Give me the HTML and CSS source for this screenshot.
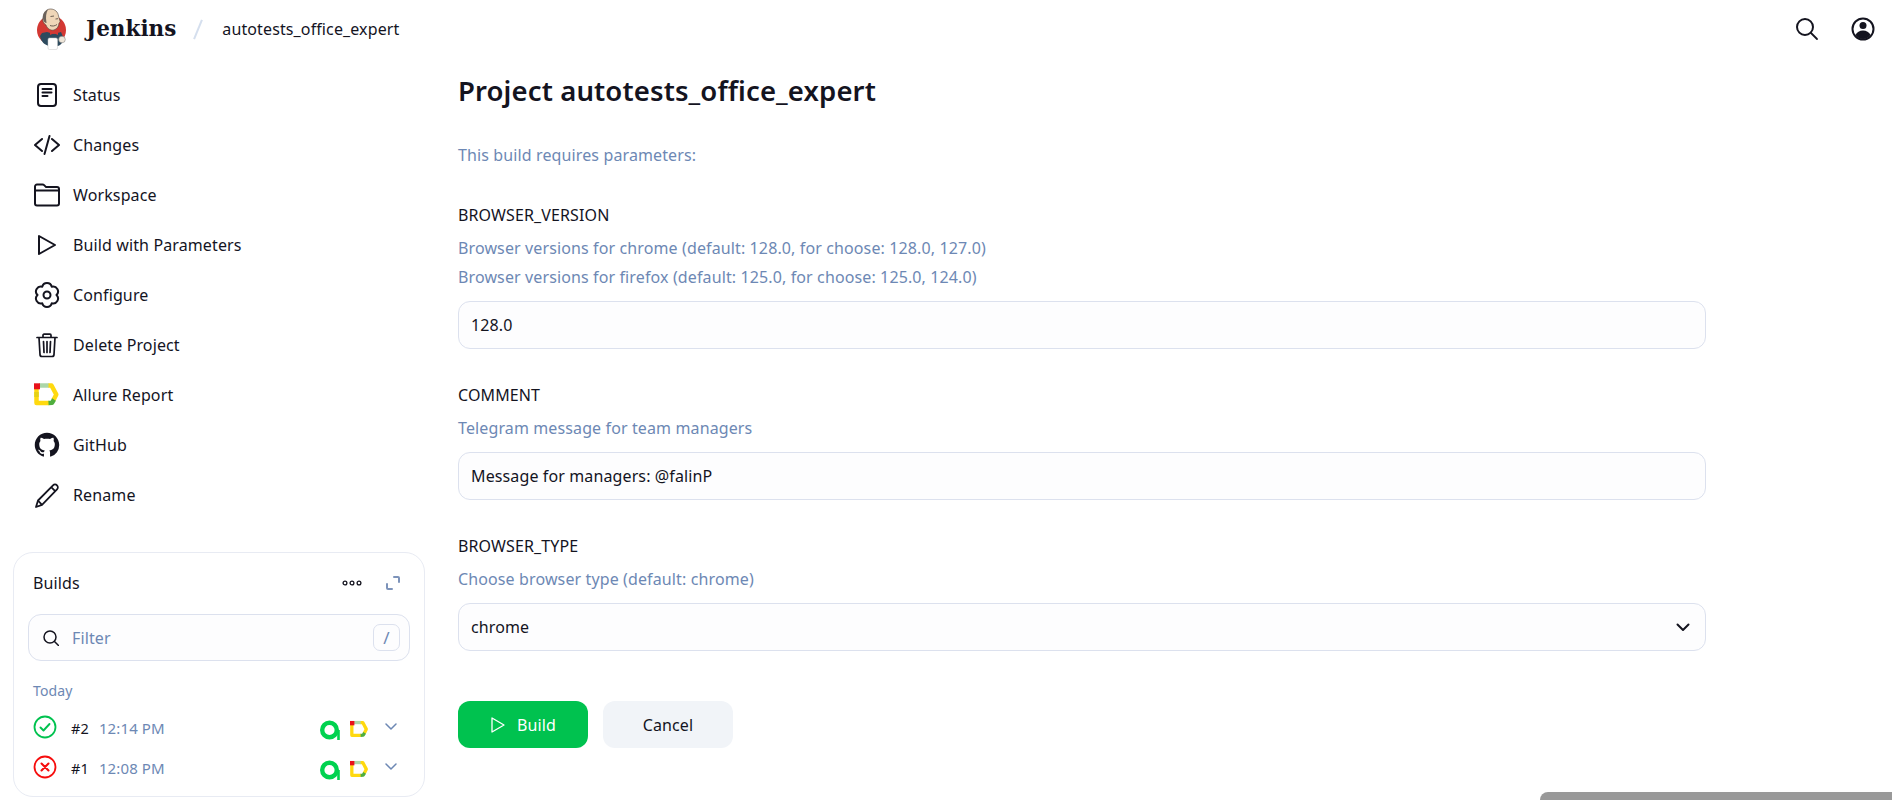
FILE: index.html
```html
<!DOCTYPE html>
<html lang="en">
<head>
    <meta charset="UTF-8">
    <meta name="viewport" content="width=device-width, initial-scale=1.0">
    <title>Jenkins - autotests_office_expert</title>
    <link rel="stylesheet" href="styles.css">
</head>
<body>
    <header class="topbar">
        <svg class="logo" viewBox="0 0 30 42">
            <circle cx="14.500" cy="22" r="14.500" fill="#d33833"/>
            <path d="M3 28c1 6 5 9 9 10h9c3-1 5-4 6-7l-3-7-7 2-7-2-5 1z" fill="#2d4a5e"/>
            <path d="M6 11C6 5 9 1 13.500 1c4.500 0 7.500 3 8 7l1.500 5c.3 1-.5 1.500-1 2 0 3-2 6-5 7-4 1-7-2-8-5-2-1-3-3-3.500-6z" fill="#efd6b8" stroke="#4a403a" stroke-width=".6"/>
            <path d="M6 11C5.500 6 8 2.500 11 1.500 9 5 8.500 9 9.500 15 8 15 6.500 13.500 6 11z" fill="#6b625b"/>
            <path d="M13.500 8.500l3.500-.5M18.500 11l2.500-.3M13 17.500c2.500 1 5 .5 7-1" fill="none" stroke="#4a403a" stroke-width=".8"/>
            <path d="M13 22l4 1.800 4-1.800v5l-4-1.800-4 1.800z" fill="#d33833"/>
            <rect x="11" y="30" width="9.500" height="11.500" rx="1.500" fill="#fff" stroke="#c4c4c4" stroke-width=".5"/>
            <circle cx="25" cy="31.500" r="3.300" fill="#efe6d9" stroke="#777" stroke-width=".5"/>
        </svg>
        <span class="brand">Jenkins</span>
        <span class="crumb-sep"></span>
        <span class="crumb">autotests_office_expert</span>
        <div class="topbar-actions">
            <svg class="top-icon" viewBox="0 0 24 24" fill="none" stroke="#14141f" stroke-width="2">
                <circle cx="10" cy="10" r="8"/>
                <path d="M16 16l6 6" stroke-linecap="round" stroke-width="1.800"/>
            </svg>
            <svg class="top-icon" viewBox="0 0 24 24">
                <circle cx="12" cy="12" r="10.500" fill="none" stroke="#14141f" stroke-width="2"/>
                <circle cx="12" cy="8.500" r="3.500" fill="#14141f"/>
                <path d="M4.500 18c1.500-3 4-4.500 7.500-4.500s6 1.500 7.500 4.500c-2 2.500-4.500 4-7.500 4s-5.500-1.500-7.500-4z" fill="#14141f"/>
            </svg>
        </div>
    </header>

    <div class="layout">
        <aside class="sidebar">
            <nav class="side-nav">
                <a class="side-item">
                    <svg class="side-icon" viewBox="0 0 26 26" fill="none" stroke="#14141f" stroke-width="2" stroke-linecap="round">
                        <rect x="4" y="2" width="18" height="22" rx="3"/>
                        <path d="M8.500 7h9M8.500 10.500h9M8.500 14h5"/>
                    </svg>
                    <span>Status</span>
                </a>
                <a class="side-item">
                    <svg class="side-icon" viewBox="0 0 26 26" fill="none" stroke="#14141f" stroke-width="2" stroke-linecap="round" stroke-linejoin="round">
                        <path d="M8 7l-7 6 7 6M18 7l7 6-7 6M15.500 4l-5 18"/>
                    </svg>
                    <span>Changes</span>
                </a>
                <a class="side-item">
                    <svg class="side-icon" viewBox="0 0 26 26" fill="none" stroke="#14141f" stroke-width="2" stroke-linejoin="round">
                        <path d="M1 8.500V4.500a2 2 0 0 1 2-2h5.500c.6 0 1.200.2 1.600.6l2 2h10.900a2 2 0 0 1 2 2v14.400a2 2 0 0 1-2 2H3a2 2 0 0 1-2-2zh24"/>
                    </svg>
                    <span>Workspace</span>
                </a>
                <a class="side-item">
                    <svg class="side-icon" viewBox="0 0 26 26" fill="none" stroke="#14141f" stroke-width="2" stroke-linejoin="round">
                        <path d="M5 4l16 9-16 9z"/>
                    </svg>
                    <span>Build with Parameters</span>
                </a>
                <a class="side-item">
                    <svg class="side-icon" viewBox="0 0 26 26" fill="none" stroke="#14141f" stroke-width="2">
                        <path d="M8.250 4.770A4.900 4.900 0 0 1 17.750 4.770A4.900 4.900 0 0 1 22.500 13A4.900 4.900 0 0 1 17.750 21.230A4.900 4.900 0 0 1 8.250 21.230A4.900 4.900 0 0 1 3.500 13A4.900 4.900 0 0 1 8.250 4.770z" stroke-linejoin="round"/>
                        <circle cx="13" cy="13" r="3.500"/>
                    </svg>
                    <span>Configure</span>
                </a>
                <a class="side-item">
                    <svg class="side-icon" viewBox="0 0 26 26" fill="none" stroke="#14141f" stroke-width="2" stroke-linecap="round" stroke-linejoin="round">
                        <path d="M3 5.500h20M9 5V3.200a1 1 0 0 1 1-1h6a1 1 0 0 1 1 1V5M5 5.500l1 17a2 2 0 0 0 2 2h10a2 2 0 0 0 2-2l1-17M9.500 9.500l.5 11M13 9.500v11M16.500 9.500l-.5 11" stroke-width="1.700"/>
                    </svg>
                    <span>Delete Project</span>
                </a>
                <a class="side-item">
                    <svg class="side-icon" viewBox="0 0 26 26" fill="none" stroke-width="4.500" stroke-linejoin="round">
                        <path d="M2.500 7v14H15" stroke="#ffd90f"/>
                        <path d="M2.500 10v5" stroke="#e4d117"/>
                        <path d="M5 3.500h10" stroke="#acd6a8"/>
                        <path d="M14.500 3.500h3l4.800 9-2.800 5.500" stroke="#ffd90f"/>
                        <path d="M14.500 21l3.500-.2 2-3.300" stroke="#4fae3e"/>
                        <path d="M0 1.300h6v6H0z" fill="#e8111b" stroke="none"/>
                    </svg>
                    <span>Allure Report</span>
                </a>
                <a class="side-item">
                    <svg class="side-icon" viewBox="-.5 -.5 17 17" fill="#14141f">
                        <path d="M8 0C3.580 0 0 3.580 0 8c0 3.540 2.290 6.530 5.470 7.590.4.07.55-.17.55-.38 0-.19-.01-.82-.01-1.490-2.010.37-2.530-.49-2.690-.94-.09-.23-.48-.94-.82-1.130-.28-.15-.68-.52-.01-.53.63-.01 1.080.58 1.230.82.72 1.210 1.870.87 2.330.66.07-.52.28-.87.51-1.070-1.780-.2-3.640-.89-3.640-3.950 0-.87.31-1.590.82-2.150-.08-.2-.36-1.020.08-2.120 0 0 .67-.21 2.200.82.64-.18 1.320-.27 2-.27.68 0 1.360.09 2 .27 1.530-1.040 2.200-.82 2.200-.82.44 1.100.16 1.920.08 2.120.51.56.82 1.270.82 2.150 0 3.070-1.870 3.750-3.650 3.950.29.25.54.73.54 1.480 0 1.070-.01 1.930-.01 2.200 0 .21.15.46.55.38A8.013 8.013 0 0016 8c0-4.420-3.580-8-8-8z"/>
                    </svg>
                    <span>GitHub</span>
                </a>
                <a class="side-item">
                    <svg class="side-icon" viewBox="0 0 26 26" fill="none" stroke="#14141f" stroke-width="1.800" stroke-linejoin="round">
                        <path d="M2 25l2-6.500L19 3.300a2.800 2.800 0 0 1 4 4L8 22.800zM4 18.500l4 4.300M17.200 5.200l4 4"/>
                    </svg>
                    <span>Rename</span>
                </a>
            </nav>

            <section class="builds-card">
                <div class="builds-head">
                    <span>Builds</span>
                    <svg class="builds-dots" viewBox="0 0 20 6" fill="none" stroke="#14141f" stroke-width="1.300">
                        <circle cx="3" cy="3" r="1.900"/>
                        <circle cx="10" cy="3" r="1.900"/>
                        <circle cx="17" cy="3" r="1.900"/>
                    </svg>
                    <svg class="builds-expand" viewBox="0 0 14 14" fill="none" stroke="#7d93ba" stroke-width="2" stroke-linecap="round" stroke-linejoin="round">
                        <path d="M8 1h4a1 1 0 0 1 1 1v4M1 8v4a1 1 0 0 0 1 1h4"/>
                    </svg>
                </div>
                <div class="filter-box">
                    <svg class="filter-icon" viewBox="0 0 16 16" fill="none" stroke="#14141f" stroke-width="1.500" stroke-linecap="round">
                        <circle cx="7" cy="7" r="6"/>
                        <path d="M11.500 11.500l4 4"/>
                    </svg>
                    <input class="filter-input" type="text" placeholder="Filter">
                    <kbd class="filter-key">/</kbd>
                </div>
                <div class="builds-day">Today</div>
                <div class="build-row">
                    <svg class="build-status" viewBox="0 0 24 24" fill="none" stroke="#00c24f" stroke-width="1.800" stroke-linecap="round" stroke-linejoin="round">
                        <circle cx="12" cy="12" r="10.500"/>
                        <path d="M7.500 12.500l3 3 6-6.500" stroke-width="1.900"/>
                    </svg>
                    <span class="build-num">#2</span>
                    <span class="build-time">12:14 PM</span>
                    <svg class="build-a" viewBox="0 0 20 20" fill="none" stroke="#00d24f">
                        <circle cx="9.500" cy="10" r="7.300" stroke-width="4.400"/>
                        <path d="M18.500 10v10" stroke-width="2.600"/>
                    </svg>
                    <svg class="build-allure" viewBox="0 0 26 26" fill="none" stroke-width="4.500" stroke-linejoin="round">
                        <path d="M2.500 7v14H15" stroke="#ffd90f"/>
                        <path d="M5 3.500h10" stroke="#acd6a8"/>
                        <path d="M14.500 3.500h3l4.800 9-2.800 5.500" stroke="#ffd90f"/>
                        <path d="M14.500 21l3.500-.2 2-3.300" stroke="#4fae3e"/>
                        <path d="M0 1.300h6v6H0z" fill="#e8111b" stroke="none"/>
                    </svg>
                    <svg class="build-chevron" viewBox="0 0 12 7" fill="none" stroke="#6d88b4" stroke-width="1.500" stroke-linecap="round" stroke-linejoin="round">
                        <path d="M1 1l5 5 5-5"/>
                    </svg>
                </div>
                <div class="build-row">
                    <svg class="build-status" viewBox="0 0 24 24" fill="none" stroke="#f60d0d" stroke-width="1.800" stroke-linecap="round">
                        <circle cx="12" cy="12" r="10.500"/>
                        <path d="M8.500 8.500l7 7M15.500 8.500l-7 7" stroke-width="2.100"/>
                    </svg>
                    <span class="build-num">#1</span>
                    <span class="build-time">12:08 PM</span>
                    <svg class="build-a" viewBox="0 0 20 20" fill="none" stroke="#00d24f">
                        <circle cx="9.500" cy="10" r="7.300" stroke-width="4.400"/>
                        <path d="M18.500 10v10" stroke-width="2.600"/>
                    </svg>
                    <svg class="build-allure" viewBox="0 0 26 26" fill="none" stroke-width="4.500" stroke-linejoin="round">
                        <path d="M2.500 7v14H15" stroke="#ffd90f"/>
                        <path d="M5 3.500h10" stroke="#acd6a8"/>
                        <path d="M14.500 3.500h3l4.800 9-2.800 5.500" stroke="#ffd90f"/>
                        <path d="M14.500 21l3.500-.2 2-3.300" stroke="#4fae3e"/>
                        <path d="M0 1.300h6v6H0z" fill="#e8111b" stroke="none"/>
                    </svg>
                    <svg class="build-chevron" viewBox="0 0 12 7" fill="none" stroke="#6d88b4" stroke-width="1.500" stroke-linecap="round" stroke-linejoin="round">
                        <path d="M1 1l5 5 5-5"/>
                    </svg>
                </div>
            </section>
        </aside>

        <main class="content">
            <h1 class="page-title">Project autotests_office_expert</h1>
            <p class="intro">This build requires parameters:</p>

            <div class="param">
                <div class="param-name">BROWSER_VERSION</div>
                <div class="param-desc">Browser versions for chrome (default: 128.0, for choose: 128.0, 127.0)</div>
                <div class="param-desc">Browser versions for firefox (default: 125.0, for choose: 125.0, 124.0)</div>
                <input class="field" type="text" value="128.0">
            </div>

            <div class="param">
                <div class="param-name">COMMENT</div>
                <div class="param-desc">Telegram message for team managers</div>
                <input class="field" type="text" value="Message for managers: @falinP">
            </div>

            <div class="param">
                <div class="param-name">BROWSER_TYPE</div>
                <div class="param-desc">Choose browser type (default: chrome)</div>
                <div class="select-wrap">
                    <select class="field">
                        <option>chrome</option>
                        <option>firefox</option>
                    </select>
                    <svg class="select-chevron" viewBox="0 0 14 9" fill="none" stroke="#14141f" stroke-width="2" stroke-linecap="round" stroke-linejoin="round">
                        <path d="M1.500 1.500L7 7l5.500-5.500"/>
                    </svg>
                </div>
            </div>

            <div class="actions">
                <button class="btn btn-build">
                    <svg class="btn-icon" viewBox="0 0 16 18" fill="none" stroke="#fff" stroke-width="1.300" stroke-linejoin="round">
                        <path d="M2 2l12 7-12 7z"/>
                    </svg>
                    Build
                </button>
                <button class="btn btn-cancel">Cancel</button>
            </div>
        </main>
    </div>

    <div class="corner-bar"></div>
</body>
</html>
```

FILE: styles.css
```css
* {
    box-sizing: border-box;
}

html, body {
    height: 100%;
}

body {
    margin: 0;
    overflow: hidden;
    background-color: #fff;
    color: #14141f;
    font-family: "Noto Sans", "Open Sans", sans-serif;
    font-size: 16px;
    line-height: 24px;
    letter-spacing: .12px;
}

.topbar {
    display: flex;
    align-items: center;
    height: 56px;
    padding: 2px 17px 0 37px;
}

.logo {
    width: 30px;
    height: 42px;
}

.brand {
    margin-left: 19px;
    font-family: "DejaVu Serif", serif;
    font-size: 21.5px;
    font-weight: 700;
    letter-spacing: 0;
}

.crumb-sep {
    width: 2px;
    height: 21px;
    margin: 0 23px 0 21px;
    background-color: #d5dfee;
    transform: rotate(22deg);
}

.crumb {
    font-size: 16px;
}

.topbar-actions {
    display: flex;
    align-items: center;
    gap: 32px;
    margin-left: auto;
}

.top-icon {
    width: 24px;
    height: 24px;
}

.layout {
    display: flex;
}

.sidebar {
    width: 444px;
    padding: 14px 0 0 13px;
    flex-shrink: 0;
}

.side-item {
    display: flex;
    align-items: center;
    gap: 13px;
    height: 50px;
    padding-left: 21px;
}

.side-icon {
    width: 26px;
    height: 26px;
    flex-shrink: 0;
}

.builds-card {
    width: 412px;
    height: 245px;
    margin-top: 32px;
    padding: 18px 14px 0;
    border: 1px solid #e8ebf3;
    border-radius: 20px;
}

.builds-head {
    display: flex;
    align-items: center;
    height: 24px;
    padding: 0 10px 0 5px;
}

.builds-dots {
    width: 20px;
    height: 6px;
    margin-left: auto;
}

.builds-expand {
    width: 14px;
    height: 14px;
    margin-left: 24px;
}

.filter-box {
    display: flex;
    align-items: center;
    height: 47px;
    margin-top: 19px;
    padding: 0 9px 0 14px;
    background-color: #fdfdfe;
    border: 1px solid #dce1ee;
    border-radius: 13px;
}

.filter-icon {
    width: 16px;
    height: 16px;
    flex-shrink: 0;
}

.filter-input {
    flex: 1;
    min-width: 0;
    margin-left: 13px;
    padding: 0;
    border: 0;
    outline: 0;
    background: none;
    font: inherit;
    letter-spacing: inherit;
    color: #14141f;
}

.filter-input::placeholder {
    color: #6d88b4;
    opacity: 1;
}

.filter-key {
    display: flex;
    align-items: center;
    justify-content: center;
    width: 27px;
    height: 27px;
    border: 1px solid #dce1ee;
    border-radius: 7px;
    font-family: inherit;
    font-size: 17px;
    color: #6d88b4;
}

.builds-day {
    margin-top: 18px;
    padding-left: 5px;
    font-size: 14px;
    line-height: 24px;
    color: #6d88b4;
}

.build-row {
    display: flex;
    align-items: center;
    height: 40px;
    padding: 0 13px 0 5px;
    font-size: 14.5px;
}

.builds-day + .build-row {
    margin-top: 5px;
}

.build-status {
    width: 24px;
    height: 24px;
    flex-shrink: 0;
    margin-top: -3px;
}

.build-num {
    margin-left: 14px;
}

.build-time {
    margin-left: 10px;
    font-size: 15px;
    color: #6d88b4;
}

.build-a {
    width: 20px;
    height: 20px;
    margin: 4px 0 0 auto;
}

.build-allure {
    width: 19px;
    height: 19px;
    margin: 3px 0 0 10px;
}

.build-chevron {
    width: 12px;
    height: 7px;
    margin: -4px 0 0 16px;
}

.content {
    width: 1262px;
    padding: 15px 0 0 14px;
}

.page-title {
    margin: 0;
    font-size: 27.5px;
    font-weight: 600;
    line-height: 40px;
}

.intro {
    margin: 32px 0 0;
    color: #6d88b4;
}

.param {
    margin-top: 34px;
}

.intro + .param {
    margin-top: 36px;
}

.param-name {
    margin-bottom: 7px;
}

.param-desc {
    line-height: 29px;
    color: #6d88b4;
}

.field {
    display: block;
    width: 100%;
    height: 48px;
    margin-top: 9px;
    padding: 0 12px;
    background-color: #fdfdfe;
    border: 1px solid #dce1ee;
    border-radius: 12px;
    outline: 0;
    appearance: none;
    font: inherit;
    letter-spacing: inherit;
    color: #14141f;
}

.select-wrap {
    position: relative;
}

.select-chevron {
    position: absolute;
    top: 20px;
    right: 16px;
    width: 14px;
    height: 9px;
}

.actions {
    display: flex;
    gap: 15px;
    margin-top: 50px;
}

.btn {
    display: flex;
    align-items: center;
    justify-content: center;
    width: 130px;
    height: 47px;
    border: 0;
    border-radius: 12px;
    font: inherit;
    letter-spacing: inherit;
}

.btn-build {
    gap: 11px;
    background-color: #00c24f;
    color: #fff;
}

.btn-cancel {
    background-color: #f1f4f8;
    color: #14141f;
}

.btn-icon {
    width: 16px;
    height: 18px;
}

.corner-bar {
    position: fixed;
    left: 1540px;
    right: 0;
    bottom: 0;
    height: 8px;
    background-color: #999;
    border-top-left-radius: 8px;
}
```
